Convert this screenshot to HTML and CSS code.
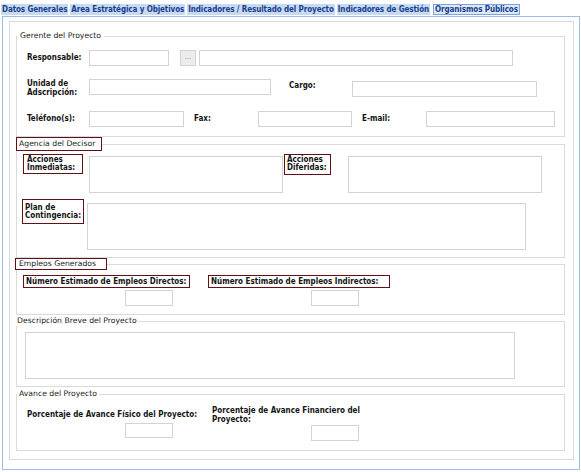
FILE: index.html
```html
<!DOCTYPE html>
<html lang="es">
<head>
<meta charset="utf-8">
<title>Organismos Públicos</title>
<link rel="stylesheet" href="styles.css">
</head>
<body>
<div class="tabs">
  <span class="tab">Datos Generales</span>
  <span class="tab">Area Estratégica y Objetivos</span>
  <span class="tab">Indicadores / Resultado del Proyecto</span>
  <span class="tab">Indicadores de Gestión</span>
  <span class="tab active">Organismos Públicos</span>
</div>
<div class="panel">
  <div class="inner">
    <fieldset class="fs fs1">
      <legend class="lg lg1">Gerente del Proyecto</legend>
      <div class="row row-a">
        <label class="lbl lbl-main">Responsable:</label>
        <input class="in in-resp" type="text">
        <button class="btn-dots" type="button">...</button>
        <input class="in in-resp2" type="text">
      </div>
      <div class="row row-b">
        <label class="lbl lbl-main lbl-two">Unidad de<br>Adscripción:</label>
        <input class="in in-unidad" type="text">
        <label class="lbl lbl-cargo">Cargo:</label>
        <input class="in in-cargo" type="text">
      </div>
      <div class="row row-c">
        <label class="lbl lbl-main">Teléfono(s):</label>
        <input class="in in-tel" type="text">
        <label class="lbl lbl-fax">Fax:</label>
        <input class="in in-fax" type="text">
        <label class="lbl lbl-mail">E-mail:</label>
        <input class="in in-mail" type="text">
      </div>
    </fieldset>

    <fieldset class="fs fs2">
      <legend class="lg lg-box lg2">Agencia del Decisor</legend>
      <div class="row row-acc">
        <label class="lbl box box-inm">Acciones<br>Inmediatas:</label>
        <textarea class="in ta ta-inm"></textarea>
        <label class="lbl box box-dif">Acciones<br>Diferidas:</label>
        <textarea class="in ta ta-dif"></textarea>
      </div>
      <div class="row row-plan">
        <label class="lbl box box-plan">Plan de<br>Contingencia:</label>
        <textarea class="in ta ta-plan"></textarea>
      </div>
    </fieldset>

    <fieldset class="fs fs3">
      <legend class="lg lg-box lg3">Empleos Generados</legend>
      <div class="row row-emp">
        <div class="col col-dir">
          <label class="lbl box box-dir">Número Estimado de Empleos Directos:</label>
          <input class="in in-num in-dir" type="text">
        </div>
        <div class="col col-ind">
          <label class="lbl box box-ind">Número Estimado de Empleos Indirectos:</label>
          <input class="in in-num in-ind" type="text">
        </div>
      </div>
    </fieldset>

    <fieldset class="fs fs4">
      <legend class="lg lg4">Descripción Breve del Proyecto</legend>
      <textarea class="in ta ta-desc"></textarea>
    </fieldset>

    <fieldset class="fs fs5">
      <legend class="lg lg5">Avance del Proyecto</legend>
      <div class="av-grid">
        <label class="lbl av-l1">Porcentaje de Avance Físico del Proyecto:</label>
        <label class="lbl av-l2">Porcentaje de Avance Financiero del<br>Proyecto:</label>
        <input class="in in-num av-i1" type="text">
        <input class="in in-num av-i2" type="text">
      </div>
    </fieldset>
  </div>
</div>
</body>
</html>
```
FILE: styles.css
```css
* { box-sizing: border-box; }
html, body { margin: 0; padding: 0; background: #ffffff; }
body {
  width: 581px;
  height: 472px;
  overflow: hidden;
  font-family: "DejaVu Sans", Verdana, sans-serif;
  font-size: 8px;
  color: #1e1e1e;
}

/* ---------- tabs ---------- */
.tabs {
  display: flex;
  gap: 2px;
  height: 16px;
  padding: 4px 0 0 1px;
}
.tab {
  height: 11px;
  line-height: 11px;
  padding: 0 1px;
  background: #c7daf4;
  color: #17408a;
  font-family: "DejaVu Sans Condensed", "DejaVu Sans", sans-serif;
  font-stretch: condensed;
  font-weight: bold;
  letter-spacing: -0.1px;
  white-space: nowrap;
}
.tab.active {
  margin-left: 1px;
  background: #dde9fa;
  border: 1px solid #7ea3da;
  line-height: 9px;
}

/* ---------- panel ---------- */
.panel {
  margin-left: 2px;
  width: 578px;
  height: 454px;
  border: 1px solid #9dbde8;
  padding: 4px 5px 9px 6px;
}
.inner {
  width: 565px;
  height: 439px;
  border: 1px solid #d6d9de;
  padding: 9px 8px 0 6px;
}

/* ---------- fieldsets ---------- */
.fs {
  margin: 0;
  padding: 0;
  width: 549px;
  min-inline-size: 0;
  border: 1px solid #dadada;
}
.lg {
  padding: 0 3px;
  line-height: 10px;
  height: 10px;
  font-size: 7.7px;
  color: #222;
  white-space: nowrap;
}
.lg-box {
  border: 1px solid #5e1119;
  padding: 0 3px 0 2px;
}
.lg2 { margin-left: -1px; height: 14px; line-height: 12px; width: 86px; }
.lg3 { margin-left: -2px; height: 12px; line-height: 10px; width: 92px; padding-left: 3px; }
.lg4 { margin-left: -1px; padding: 0 1px; }
.lg5 { padding: 0 2px; }

.fs1 { padding: 9px 0 9px 0; }
.fs2 { padding: 3px 0 7px 0; }
.fs3 { padding: 5px 0 8px 0; }
.fs4 { margin-top: 1px; padding: 6px 0 7px 0; }
.fs5 { margin-top: 2px; padding: 7px 0 9px 0; }

.row { display: flex; align-items: flex-start; }

/* labels */
.lbl {
  font-family: "DejaVu Sans Condensed", "DejaVu Sans", sans-serif;
  font-stretch: condensed;
  font-weight: bold;
  color: #141414;
  white-space: nowrap;
}
.box { border: 1px solid #5e1119; }

/* inputs */
.in {
  display: block;
  margin: 0;
  padding: 0;
  height: 16px;
  border: 1px solid #d3d3d3;
  background: #fff;
  font: inherit;
  outline: none;
  resize: none;
}

/* row a */
.row-a { height: 16px; }
.lbl-main { margin-left: 10px; width: 62px; }
.row-a .lbl-main, .row-c .lbl-main { line-height: 16px; }
.in-resp { width: 80px; }
.btn-dots {
  margin: 0 0 0 11px;
  width: 16px;
  height: 16px;
  padding: 0 0 2px;
  border: 1px solid #d3d3d3;
  background: #ececec;
  color: #777;
  font-family: "DejaVu Sans", sans-serif;
  font-size: 7px;
  line-height: 12px;
}
.in-resp2 { margin-left: 3px; width: 314px; }

/* row b */
.row-b { margin-top: 13px; height: 18px; }
.lbl-two { line-height: 9px; }
.in-unidad { width: 182px; }
.lbl-cargo { margin: 2px 0 0 18px; width: 63px; line-height: 9px; }
.in-cargo { margin-top: 2px; width: 185px; }

/* row c */
.row-c { margin-top: 14px; height: 16px; }
.row-c .lbl { line-height: 16px; }
.in-tel { width: 95px; }
.lbl-fax { margin-left: 10px; width: 64px; }
.in-fax { width: 94px; }
.lbl-mail { margin-left: 10px; width: 64px; }
.in-mail { width: 129px; }

/* agencia */
.row-acc { height: 38px; }
.box-inm, .box-dif, .box-plan { line-height: 8px; padding: 1px 2px 0 3px; }
.box-inm { margin-left: 6px; width: 60px; height: 20px; }
.ta { height: 37px; }
.ta-inm { margin: 2px 0 0 6px; width: 194px; }
.box-dif { margin-left: 1px; width: 47px; height: 21px; padding-left: 2px; }
.ta-dif { margin: 2px 0 0 17px; width: 194px; }
.row-plan { margin-top: 7px; }
.box-plan { margin-left: 5px; width: 62px; height: 25px; padding: 4px 2px 0 2px; }
.ta-plan { margin: 4px 0 0 3px; width: 439px; height: 47px; }

/* empleos */
.col { display: flex; flex-direction: column; }
.box-dir, .box-ind { height: 13px; line-height: 11px; padding: 0 2px; }
.col-dir { margin-left: 6px; }
.box-dir { width: 167px; }
.col-ind { margin-left: 18px; }
.box-ind { width: 182px; }
.in-num { width: 48px; }
.in-dir { margin: 2px 0 0 102px; }
.in-ind { margin: 2px 0 0 103px; }

/* descripcion */
.ta-desc { margin-left: 8px; width: 490px; height: 47px; }

/* avance */
.av-grid {
  display: grid;
  grid-template-columns: 185px 150px;
  grid-template-rows: 17px auto;
  align-items: center;
  margin-left: 10px;
}
.av-l1, .av-l2 { line-height: 9px; }
.av-i1 { align-self: start; margin-left: 98px; height: 15px; }
.av-i2 { align-self: start; margin: 2px 0 0 99px; }
```
